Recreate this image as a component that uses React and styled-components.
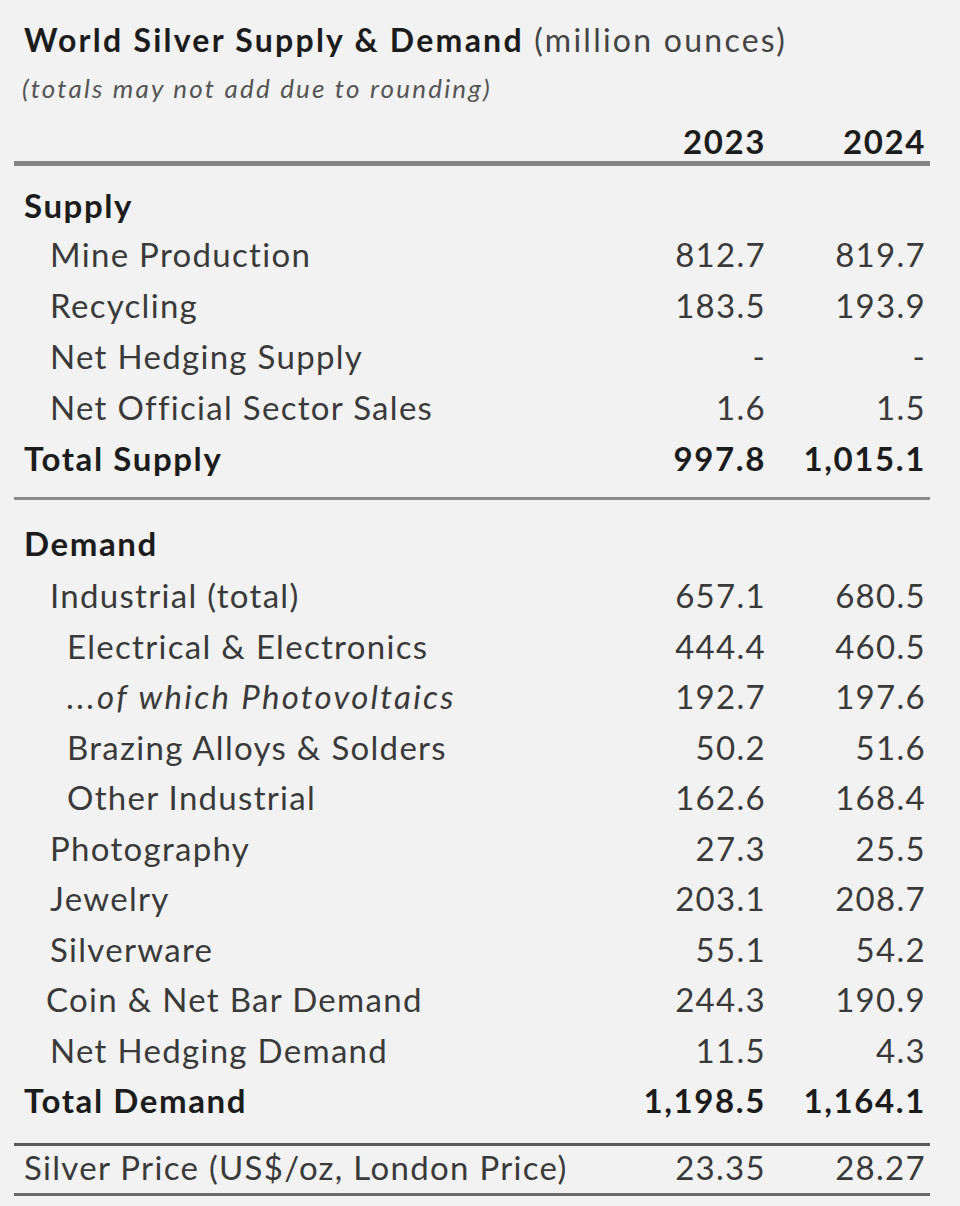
import React from "react";
import styled, { createGlobalStyle } from "styled-components";

const Global = createGlobalStyle`
  html, body { margin: 0; padding: 0; background: #f2f2f2; }
  body { font-family: Lato, "Open Sans", sans-serif; color: #3a3a3a; }
`;

const Page = styled.div`
  width: 960px;
  height: 1206px;
  box-sizing: border-box;
  padding: 18px 30px 0 14px;
  background: #f2f2f2;
`;

const Title = styled.div`
  padding-left: 10px;
  height: 44px;
  font-size: 32px;
  line-height: 44px;
  letter-spacing: 2.25px;
  white-space: nowrap;
  b { font-weight: 700; color: #1c1c1c; }
  span { font-weight: 400; color: #444; }
`;

const Note = styled.div`
  box-sizing: border-box;
  height: 46px;
  padding: 6px 0 0 8px;
  font-size: 26px;
  font-style: italic;
  line-height: 40px;
  letter-spacing: 2.2px;
  color: #555;
  white-space: nowrap;
`;

const Row = styled.div`
  display: grid;
  grid-template-columns: 1fr 160px 160px;
  align-items: center;
  box-sizing: border-box;
  height: ${(p) => p.$h || 51}px;
  padding-top: ${(p) => p.$pt || 0}px;
  padding-bottom: ${(p) => p.$pb || 0}px;
  font-size: 33px;
  line-height: 40px;
  letter-spacing: ${(p) => (p.$bold ? 1.6 : 1.3)}px;
  font-weight: ${(p) => (p.$bold ? 700 : 400)};
  color: ${(p) => (p.$bold ? "#1c1c1c" : "#3a3a3a")};
  border-bottom: ${(p) => p.$rule || "none"};
`;

const Label = styled.div`
  padding-left: ${(p) => 10 + (p.$indent || 0)}px;
  font-style: ${(p) => (p.$italic ? "italic" : "normal")};
  letter-spacing: ${(p) => (p.$italic ? "2.3px" : "inherit")};
  white-space: nowrap;
`;

const Num = styled.div`
  text-align: right;
  padding-right: 4px;
  white-space: nowrap;
`;

const Gap = styled.div`
  height: ${(p) => p.$h}px;
  border-bottom: ${(p) => p.$rule || "none"};
`;

const supply = [
  ["Mine Production", "812.7", "819.7", 26],
  ["Recycling", "183.5", "193.9", 26],
  ["Net Hedging Supply", "-", "-", 26],
  ["Net Official Sector Sales", "1.6", "1.5", 26],
];

const demand = [
  ["Industrial (total)", "657.1", "680.5", 26],
  ["Electrical & Electronics", "444.4", "460.5", 43],
  ["...of which Photovoltaics", "192.7", "197.6", 43, true],
  ["Brazing Alloys & Solders", "50.2", "51.6", 43],
  ["Other Industrial", "162.6", "168.4", 43],
  ["Photography", "27.3", "25.5", 26],
  ["Jewelry", "203.1", "208.7", 26],
  ["Silverware", "55.1", "54.2", 26],
  ["Coin & Net Bar Demand", "244.3", "190.9", 22],
  ["Net Hedging Demand", "11.5", "4.3", 26],
];

const DataRow = ({ r, h }) => (
  <Row $h={h}>
    <Label $indent={r[3]} $italic={r[4]}>{r[0]}</Label>
    <Num>{r[1]}</Num>
    <Num>{r[2]}</Num>
  </Row>
);

export default function App() {
  return (
    <Page>
      <Global />
      <Title>
        <b>World Silver Supply &amp; Demand</b> <span>(million ounces)</span>
      </Title>
      <Note>(totals may not add due to rounding)</Note>
      <Row $bold $h={58} $pt={12} $rule="5px solid #858585">
        <Label />
        <Num>2023</Num>
        <Num>2024</Num>
      </Row>
      <Row $bold $h={62} $pt={15}>
        <Label>Supply</Label>
      </Row>
      {supply.map((r) => (
        <DataRow key={r[0]} r={r} />
      ))}
      <Row $bold>
        <Label>Total Supply</Label>
        <Num>997.8</Num>
        <Num>1,015.1</Num>
      </Row>
      <Gap $h={14} $rule="3px solid #8c8c8c" />
      <Row $bold $h={70} $pt={16}>
        <Label>Demand</Label>
      </Row>
      {demand.map((r) => (
        <DataRow key={r[0]} r={r} h={50.5} />
      ))}
      <Row $bold $h={50.5}>
        <Label>Total Demand</Label>
        <Num>1,198.5</Num>
        <Num>1,164.1</Num>
      </Row>
      <Gap $h={17.5} $rule="3px solid #5a5a5a" />
      <Row $h={50} $pb={6} $rule="3px solid #6a6a6a">
        <Label>Silver Price (US$/oz, London Price)</Label>
        <Num>23.35</Num>
        <Num>28.27</Num>
      </Row>
    </Page>
  );
}
